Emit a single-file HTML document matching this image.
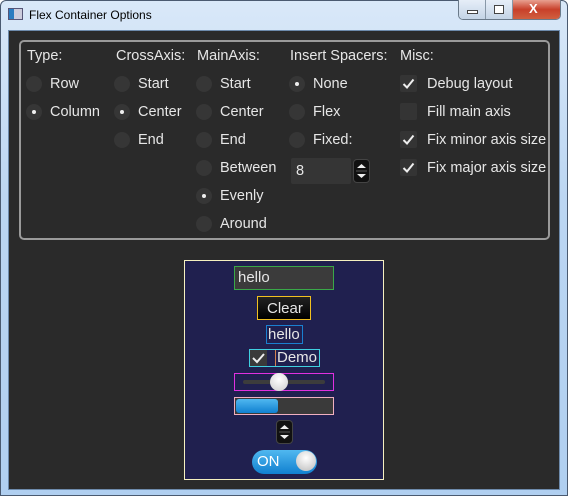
<!DOCTYPE html>
<html><head><style>
*{margin:0;padding:0;box-sizing:border-box}
body{width:568px;height:498px;overflow:hidden;background:#fff;font-family:"Liberation Sans",sans-serif;position:relative}
.frame{position:absolute;left:0;top:0;width:568px;height:496px;border:1px solid #4a5a70;border-radius:6px 6px 0 0;background:linear-gradient(#d9e8f8,#bcd6f2 40%,#b0cff0);}
.title{position:absolute;left:29px;top:8px;font-size:12px;color:#000}
.ico{position:absolute;left:8px;top:8px;width:15px;height:12px;border:1px solid #557;background:linear-gradient(90deg,#2a7bc0 40%,#ccd 40%)}
.btns{position:absolute;left:458px;top:0;width:103px;height:20px;border:1px solid #6a7a8a;border-top:none;border-radius:0 0 5px 5px;overflow:hidden;display:flex}
.b1,.b2{width:27px;background:linear-gradient(#e6eef8,#c4d4e6);border-right:1px solid #8898a8;position:relative}
.b3{flex:1;background:linear-gradient(#e8a090,#c8402a 50%,#d06040)}
.content{position:absolute;left:8px;top:30px;width:552px;height:460px;background:#2a2a2a;border:1px solid #6d8aab}
.t{position:absolute;color:#e6e6e6;font-size:14.5px;line-height:16px;white-space:nowrap}
.r{position:absolute;width:16px;height:16px;border-radius:50%;background:#363636}
.r.s::after{content:"";position:absolute;left:6px;top:6px;width:4px;height:4px;border-radius:50%;background:#eee}
.c{position:absolute;width:17px;height:17px;background:#343434;border-radius:2px}
.c svg{position:absolute;left:2px;top:2px}
</style></head><body>
<div class="frame"></div>
<div class="ico"></div>
<div class="title">Flex Container Options</div>
<div class="btns"><div class="b1"><div style="position:absolute;left:8px;top:10px;width:11px;height:4px;border:1px solid #444;background:#fff"></div></div><div class="b2"><div style="position:absolute;left:8px;top:5px;width:10px;height:9px;border:1px solid #444;background:#fff"></div></div><div class="b3" style="position:relative"><span style="position:absolute;left:16px;top:1px;color:#fff;font-weight:bold;font-size:13px">X</span></div></div>
<div class="content"></div>
<div style="position:absolute;left:19px;top:40px;width:531px;height:200px;border:2px solid #9a9a9a;border-radius:5px"></div>

<div class="t" style="left:27px;top:48px">Type:</div>
<div class="r" style="left:26px;top:76px"></div><div class="t" style="left:50px;top:76px">Row</div>
<div class="r s" style="left:26px;top:104px"></div><div class="t" style="left:50px;top:104px">Column</div>

<div class="t" style="left:116px;top:48px">CrossAxis:</div>
<div class="r" style="left:114px;top:76px"></div><div class="t" style="left:138px;top:76px">Start</div>
<div class="r s" style="left:114px;top:104px"></div><div class="t" style="left:138px;top:104px">Center</div>
<div class="r" style="left:114px;top:132px"></div><div class="t" style="left:138px;top:132px">End</div>

<div class="t" style="left:197px;top:48px">MainAxis:</div>
<div class="r" style="left:196px;top:76px"></div><div class="t" style="left:220px;top:76px">Start</div>
<div class="r" style="left:196px;top:104px"></div><div class="t" style="left:220px;top:104px">Center</div>
<div class="r" style="left:196px;top:132px"></div><div class="t" style="left:220px;top:132px">End</div>
<div class="r" style="left:196px;top:160px"></div><div class="t" style="left:220px;top:160px">Between</div>
<div class="r s" style="left:196px;top:188px"></div><div class="t" style="left:220px;top:188px">Evenly</div>
<div class="r" style="left:196px;top:216px"></div><div class="t" style="left:220px;top:216px">Around</div>

<div class="t" style="left:290px;top:48px">Insert Spacers:</div>
<div class="r s" style="left:289px;top:76px"></div><div class="t" style="left:313px;top:76px">None</div>
<div class="r" style="left:289px;top:104px"></div><div class="t" style="left:313px;top:104px">Flex</div>
<div class="r" style="left:289px;top:132px"></div><div class="t" style="left:313px;top:132px">Fixed:</div>
<div style="position:absolute;left:291px;top:158px;width:60px;height:26px;background:#353535;border-radius:2px"></div>
<div class="t" style="left:296px;top:163px">8</div>
<div style="position:absolute;left:353px;top:159px;width:17px;height:24px;background:#111;border:1px solid #444;border-radius:4px"><svg width="15" height="22"><path d="M3 8 L7.5 4 L12 8Z M3 14 L7.5 18 L12 14Z" fill="#eee"/><line x1="2" y1="11" x2="13" y2="11" stroke="#555"/></svg></div>

<div class="t" style="left:400px;top:48px">Misc:</div>
<div class="c" style="left:400px;top:75px"><svg width="13" height="13"><path d="M1.5 7 L5 10.5 L11.5 2.5" stroke="#eee" stroke-width="2" fill="none"/></svg></div><div class="t" style="left:427px;top:76px">Debug layout</div>
<div class="c" style="left:400px;top:103px"></div><div class="t" style="left:427px;top:104px">Fill main axis</div>
<div class="c" style="left:400px;top:131px"><svg width="13" height="13"><path d="M1.5 7 L5 10.5 L11.5 2.5" stroke="#eee" stroke-width="2" fill="none"/></svg></div><div class="t" style="left:427px;top:132px">Fix minor axis size</div>
<div class="c" style="left:400px;top:159px"><svg width="13" height="13"><path d="M1.5 7 L5 10.5 L11.5 2.5" stroke="#eee" stroke-width="2" fill="none"/></svg></div><div class="t" style="left:427px;top:160px">Fix major axis size</div>

<div style="position:absolute;left:184px;top:260px;width:200px;height:220px;background:#20204f;border:1px solid #f5f0c0"></div>
<div style="position:absolute;left:234px;top:266px;width:100px;height:24px;background:#3b3b3b;border:1px solid #3aa848"></div>
<div class="t" style="left:238px;top:270px;font-size:15px">hello</div>
<div style="position:absolute;left:257px;top:296px;width:54px;height:24px;background:linear-gradient(#222,#000);border:1px solid #f0c020"></div>
<div class="t" style="left:267px;top:301px;font-size:15px">Clear</div>
<div style="position:absolute;left:266px;top:325px;width:37px;height:19px;border:1px solid #1a80d0"></div>
<div class="t" style="left:268px;top:327px;font-size:15px">hello</div>
<div style="position:absolute;left:249px;top:349px;width:71px;height:18px;border:1px solid #40d0e0"></div>
<div style="position:absolute;left:250px;top:350px;width:17px;height:16px;background:#3a3a3a"><svg width="17" height="16"><path d="M3 8 L7 12 L14 4" stroke="#eee" stroke-width="2" fill="none"/></svg></div>
<div style="position:absolute;left:275px;top:350px;width:1px;height:16px;background:#d08050"></div>
<div class="t" style="left:277px;top:350px;font-size:15px">Demo</div>
<div style="position:absolute;left:234px;top:373px;width:100px;height:18px;border:1px solid #e030e0"></div>
<div style="position:absolute;left:243px;top:380px;width:82px;height:4px;background:#3c3c3c;border-radius:2px"></div>
<div style="position:absolute;left:270px;top:373px;width:18px;height:18px;border-radius:50%;background:radial-gradient(circle at 50% 35%,#fff,#ccc)"></div>
<div style="position:absolute;left:234px;top:397px;width:100px;height:18px;border:1px solid #f0b0c0;background:#3a3a3a"></div>
<div style="position:absolute;left:236px;top:399px;width:42px;height:14px;border-radius:3px;background:linear-gradient(#50b8f0,#1080d0)"></div>
<div style="position:absolute;left:276px;top:420px;width:17px;height:24px;background:#111;border:1px solid #444;border-radius:4px"><svg width="15" height="22"><path d="M3 8 L7.5 4 L12 8Z M3 14 L7.5 18 L12 14Z" fill="#eee"/><line x1="2" y1="11" x2="13" y2="11" stroke="#555"/></svg></div>
<div style="position:absolute;left:252px;top:450px;width:65px;height:24px;border-radius:12px;background:linear-gradient(#50b8f0,#1080d0)"></div>
<div class="t" style="left:257px;top:454px;font-size:15px;color:#fff">ON</div>
<div style="position:absolute;left:296px;top:451px;width:20px;height:20px;border-radius:50%;background:radial-gradient(circle at 50% 35%,#fff,#bbb)"></div>
</body></html>
